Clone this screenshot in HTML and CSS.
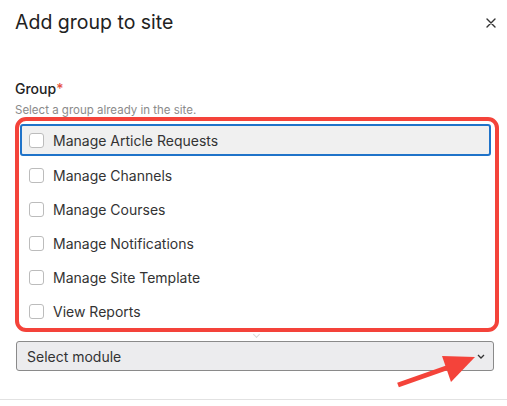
FILE: index.html
```html
<!DOCTYPE html>
<html lang="en">
<head>
    <meta charset="UTF-8">
    <meta name="viewport" content="width=device-width, initial-scale=1.0">
    <title>Add group to site</title>
    <link rel="stylesheet" href="styles.css">
</head>
<body>
    <div class="modal">
        <!-- header -->
        <div class="modal-header">
            <h1 class="modal-title">Add group to site</h1>
            <span class="close-btn">
                <svg width="10" height="10" viewBox="0 0 10 10">
                    <path d="M1 1 L9 9 M9 1 L1 9" stroke="#333" stroke-width="1.4" stroke-linecap="round"/>
                </svg>
            </span>
        </div>

        <!-- body -->
        <div class="modal-body">
            <label class="field-label">Group<span class="required">*</span></label>
            <div class="field-help">Select a group already in the site.</div>

            <div class="group-list">
                <div class="group-item focused"><span class="checkbox"></span>Manage Article Requests</div>
                <div class="group-item"><span class="checkbox"></span>Manage Channels</div>
                <div class="group-item"><span class="checkbox"></span>Manage Courses</div>
                <div class="group-item"><span class="checkbox"></span>Manage Notifications</div>
                <div class="group-item"><span class="checkbox"></span>Manage Site Template</div>
                <div class="group-item"><span class="checkbox"></span>View Reports</div>
                <span class="list-caret"></span>
            </div>

            <div class="select-box">
                <span>Select module</span>
                <svg width="8" height="5" viewBox="0 0 8 5">
                    <path d="M1 1 L4 4 L7 1" fill="none" stroke="#333" stroke-width="1.3"/>
                </svg>
            </div>
        </div>

        <div class="modal-footer"></div>
    </div>

    <!-- annotation arrow -->
    <svg class="annotation-arrow" width="507" height="406" viewBox="0 0 507 406">
        <line x1="398" y1="385" x2="452" y2="366" stroke="#f4433a" stroke-width="5"/>
        <polygon points="475,357 442,356 451,382" fill="#f4433a"/>
    </svg>
</body>
</html>
```

FILE: styles.css
```css
* {
    margin: 0;
    padding: 0;
    box-sizing: border-box;
}

body {
    background: #ffffff;
    font-family: Inter, 'Noto Sans', sans-serif;
    color: #2b2b2b;
    width: 507px;
    height: 406px;
    overflow: hidden;
    position: relative;
}

/* header */
.modal-header {
    display: flex;
    justify-content: space-between;
    align-items: center;
    padding: 9px 11px 0 15px;
    height: 36px;
}

.modal-title {
    font-size: 19.5px;
    font-weight: 400;
    line-height: 27px;
    color: #222;
}

.close-btn {
    display: flex;
}

/* body */
.modal-body {
    padding: 43px 0 0 15px;
    display: flex;
    flex-direction: column;
}

.field-label {
    font-size: 14px;
    font-weight: 500;
    line-height: 20px;
    color: #222;
}

.required {
    color: #e5533f;
}

.field-help {
    font-size: 11.5px;
    line-height: 16px;
    color: #8b8b8b;
    margin-top: 3px;
}

.group-list {
    position: relative;
    width: 484px;
    margin-top: -1px;
    border: 4px solid #f4433a;
    border-radius: 11px;
    padding: 3px 4px 0 1px;
}

.group-item {
    display: flex;
    align-items: center;
    height: 34px;
    padding-left: 9px;
    font-size: 14px;
    color: #333;
}

.group-item.focused {
    height: 32px;
    margin-bottom: 2px;
    background: #f0f0f0;
    border: 2px solid #1f73c9;
    border-radius: 3px;
    padding-left: 7px;
}

.checkbox {
    width: 15px;
    height: 15px;
    border: 1px solid #bcbcbc;
    border-radius: 3px;
    background: #fff;
    margin-right: 9px;
}

.list-caret {
    position: absolute;
    left: 235px;
    bottom: -9px;
    width: 5px;
    height: 5px;
    border-right: 1px solid #d8d8d8;
    border-bottom: 1px solid #d8d8d8;
    transform: rotate(45deg);
}

.select-box {
    display: flex;
    justify-content: space-between;
    align-items: center;
    width: 478px;
    height: 30px;
    margin: 9px 0 0 1px;
    padding: 0 8px 0 10px;
    background: #ececee;
    border: 1px solid #8a8a8a;
    border-radius: 3px;
    font-size: 14px;
    color: #333;
}

.modal-footer {
    margin-top: 28px;
    border-top: 1px solid #e2e2e2;
}

.annotation-arrow {
    position: absolute;
    top: 0;
    left: 0;
    pointer-events: none;
}
```
